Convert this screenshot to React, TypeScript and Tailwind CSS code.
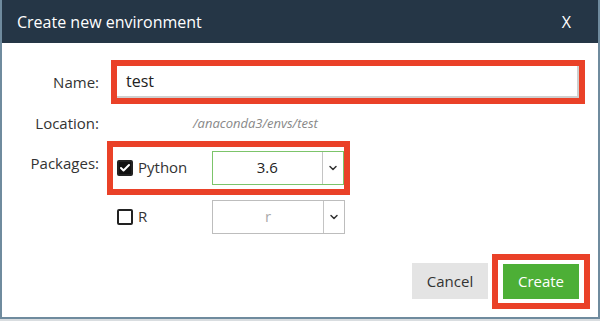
import { ChevronDown, Check } from "lucide-react";

const font = { fontFamily: '"Open Sans", "Noto Sans", sans-serif' };

function Select({ value, active }: { value: string; active?: boolean }) {
  return (
    <div
      className={`flex h-[34px] w-[133px] items-stretch border bg-white ${
        active ? "border-[#7cc46a]" : "border-[#bdbdbd]"
      }`}
    >
      <div
        className={`flex flex-1 items-center justify-center text-[15px] ${
          active ? "text-[#222]" : "text-[#aaa]"
        }`}
      >
        {value}
      </div>
      <div className="flex w-[21px] items-center justify-center border-l border-[#c4c4c4]">
        <ChevronDown className="h-3 w-3 text-[#333]" strokeWidth={3} />
      </div>
    </div>
  );
}

function Checkbox({ checked }: { checked?: boolean }) {
  return (
    <div
      className={`flex h-4 w-4 items-center justify-center rounded-[2px] border-2 border-[#222] ${
        checked ? "bg-[#111]" : "bg-white"
      }`}
    >
      {checked && <Check className="h-3 w-3 text-white" strokeWidth={4} />}
    </div>
  );
}

export default function App() {
  return (
    <div className="h-[321px] w-[600px] overflow-hidden bg-[#d9dde0]" style={font}>
      <div className="flex h-[319px] flex-col border-2 border-t-0 border-[#6f8b9e] bg-white">
        <div className="flex h-[43px] items-center justify-between bg-[#253646] pl-[15px] pr-[27px] text-white">
          <span className="text-[16px]">Create new environment</span>
          <span className="text-[16px]">X</span>
        </div>

        <div className="flex flex-1 flex-col text-[15px] text-[#333]">
          <div className="mt-[17px] flex items-center">
            <div className="w-[97px] text-right">Name:</div>
            <div className="ml-[12px] h-[44px] w-[474px] border-[6px] border-[#ea4128]">
              <div className="flex h-full items-center border-b-2 border-r-2 border-[#cfcfcf] pl-[9px] text-[16px] text-[#222]">
                test
              </div>
            </div>
          </div>

          <div className="mt-[8px] flex items-center">
            <div className="w-[97px] text-right">Location:</div>
            <div className="ml-[94px] text-[13px] italic text-[#888]">/anaconda3/envs/test</div>
          </div>

          <div className="mt-[6px] flex items-start">
            <div className="mt-[11px] w-[97px] text-right">Packages:</div>
            <div className="ml-[8px] flex flex-col">
              <div className="flex h-[54px] w-[243px] items-center border-[6px] border-[#ea4128] pl-[4px]">
                <Checkbox checked />
                <span className="ml-[5px] w-[74px]">Python</span>
                <Select value="3.6" active />
              </div>
              <div className="mt-[5px] flex items-center pl-[10px]">
                <Checkbox />
                <span className="ml-[5px] w-[74px]">R</span>
                <Select value="r" />
              </div>
            </div>
          </div>

          <div className="mt-[20px] flex items-center justify-end pr-[8px]">
            <button className="h-[36px] w-[76px] bg-[#e4e4e4] text-[15px] text-[#333]">Cancel</button>
            <div className="ml-[4px] border-[6px] border-[#ea4128] px-[5px] py-[4px]">
              <button className="h-[35px] w-[76px] bg-[#4daf36] text-[15px] text-white">Create</button>
            </div>
          </div>
        </div>
      </div>
    </div>
  );
}
